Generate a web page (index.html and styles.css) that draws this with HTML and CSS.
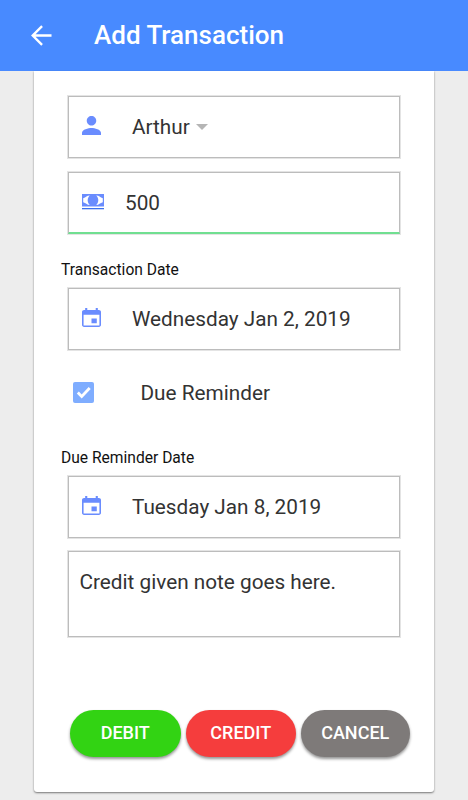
FILE: index.html
```html
<!DOCTYPE html>
<html lang="en">
<head>
<meta charset="utf-8">
<title>Add Transaction</title>
<link rel="stylesheet" href="styles.css">
</head>
<body>
<header class="bar">
  <svg class="back" viewBox="0 0 22 22"><path d="M21.5 11H2.2M11.6 1.2 1.8 11l9.8 9.8"/></svg>
  <h1 class="title">Add Transaction</h1>
</header>
<main class="card">
  <div class="field">
    <svg class="icon" viewBox="4 4 16 16"><path d="M12 12c2.21 0 4-1.79 4-4s-1.79-4-4-4-4 1.79-4 4 1.79 4 4 4zm0 2c-2.67 0-8 1.34-8 4v2h16v-2c0-2.66-5.33-4-8-4z"/></svg>
    <span class="value">Arthur</span><span class="caret"></span>
  </div>
  <div class="field amount">
    <svg class="icon cash" viewBox="0 0 22 16"><path fill-rule="evenodd" d="M0 0h22v12.500H0zM7.800 1.500C5 1.500 3.800 3.500 1.200 4.300v4C3.800 9 5 11 7.800 11 5 8.500 5 4 7.800 1.500zM14.200 1.500c2.800 0 4 2 6.600 2.800v4C18.200 9 17 11 14.200 11c2.800-2.500 2.800-7 0-9.500z"/><path class="cash-line" d="M0 14h22v1.300H0z"/></svg>
    <span class="value">500</span>
  </div>
  <div class="label">Transaction Date</div>
  <div class="field">
    <svg class="icon calendar" viewBox="3 1 18 20" preserveAspectRatio="none"><path d="M17 12h-5v5h5v-5zM16 1v2H8V1H6v2H5c-1.11 0-2 .9-2 2v14c0 1.1.89 2 2 2h14c1.1 0 2-.9 2-2V5c0-1.1-.9-2-2-2h-1V1h-2zm3.500 18.500h-15V8h15v11.500z"/></svg>
    <span class="value">Wednesday Jan 2, 2019</span>
  </div>
  <div class="check-row">
    <svg class="check" viewBox="0 0 21 21"><rect width="21" height="21" rx="2"/><path d="m4.800 10.500 3.900 4 8-8.500"/></svg>
    <span class="value">Due Reminder</span>
  </div>
  <div class="label">Due Reminder Date</div>
  <div class="field">
    <svg class="icon calendar" viewBox="3 1 18 20" preserveAspectRatio="none"><path d="M17 12h-5v5h5v-5zM16 1v2H8V1H6v2H5c-1.11 0-2 .9-2 2v14c0 1.1.89 2 2 2h14c1.1 0 2-.9 2-2V5c0-1.1-.9-2-2-2h-1V1h-2zm3.500 18.500h-15V8h15v11.500z"/></svg>
    <span class="value">Tuesday Jan 8, 2019</span>
  </div>
  <div class="field note"><span class="value">Credit given note goes here.</span></div>
  <div class="actions">
    <button class="btn debit">DEBIT</button>
    <button class="btn credit">CREDIT</button>
    <button class="btn cancel">CANCEL</button>
  </div>
</main>
</body>
</html>
```
FILE: styles.css
```css
* { box-sizing: border-box; }
body {
  margin: 0;
  height: 800px;
  overflow: hidden;
  background: #ededed;
  font-family: Roboto, sans-serif;
  color: #333;
}
.bar {
  height: 71px;
  display: flex;
  align-items: center;
  padding: 0 0 1px 31px;
  background: #488aff;
  color: #fff;
}
.back {
  width: 21px;
  height: 21px;
  margin-right: 42px;
  fill: none;
  stroke: #fff;
  stroke-width: 2.5;
}
.title { margin: 0; font-size: 26px; font-weight: 500; line-height: 30px; }
.card {
  width: 400px;
  height: 721px;
  margin-left: 34px;
  padding: 25px 34px 0;
  background: #fff;
  border-radius: 0 0 3px 3px;
  box-shadow: 0 1px 2px rgba(0, 0, 0, .5);
}
.field {
  height: 62px;
  display: flex;
  align-items: center;
  padding-left: 13px;
  border: 1px solid #bcbcbc;
  box-shadow: 0 0 0 1px #e4e4e4;
}
.icon { width: 19px; height: 19px; margin: 0 31px 3px 0; fill: #6a8cfe; flex: none; }
.value { font-size: 20.75px; line-height: 26px; }
.caret {
  margin-left: 6px;
  border: 6.5px solid transparent;
  border-top-color: #b5b5b5;
  border-bottom: 0;
}
.amount { margin-top: 14px; border-bottom: 2px solid #70df91; }
.cash { width: 22px; height: 16px; margin: 0 21px 2px 0; }
.cash-line { fill: #3c70ee; }
.label {
  height: 54px;
  margin-left: -7px;
  padding-top: 26px;
  font-size: 15.6px;
  line-height: 20px;
  color: #111;
}
.check-row { height: 84px; display: flex; align-items: center; padding: 1px 0 0 5px; }
.check { width: 21px; height: 21px; margin-right: 46.5px; }
.check rect { fill: #7fadff; }
.check path { fill: none; stroke: #fff; stroke-width: 2.8; }
.check-row + .label { height: 42px; padding-top: 14px; }
.note { height: 86px; margin-top: 13px; padding: 17px 0 0 10.5px; align-items: flex-start; }
.actions { display: flex; gap: 5px; margin: 73px 0 0 2px; }
.btn {
  width: 110.5px;
  height: 47px;
  flex: none;
  padding: 0 0 2px;
  border: 0;
  border-radius: 24px;
  font: 500 18px/22px Roboto, sans-serif;
  color: #fff;
  box-shadow: 0 2px 3px rgba(0, 0, 0, .42);
}
.debit { background: #32d313; }
.credit { background: #f53d3d; }
.cancel { width: 108.5px; background: #7e7a79; }
```
